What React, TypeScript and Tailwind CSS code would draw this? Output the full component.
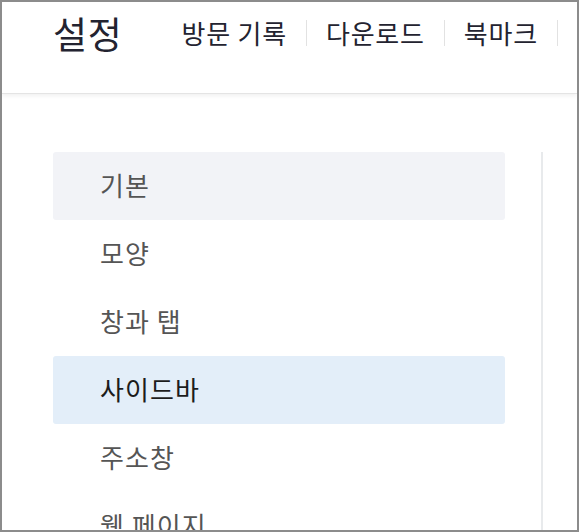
const navItems = ["방문 기록", "다운로드", "북마크", "확장"];

const menu = [
  { label: "기본", state: "hover" },
  { label: "모양", state: "" },
  { label: "창과 탭", state: "" },
  { label: "사이드바", state: "active" },
  { label: "주소창", state: "" },
  { label: "웹 페이지", state: "" },
];

export default function App() {
  return (
    <div
      className="w-[579px] h-[532px] overflow-hidden border-2 border-[#8c8c8c] bg-white"
      style={{ fontFamily: '"Noto Sans CJK KR", "Noto Sans", sans-serif' }}
    >
      <header className="h-[92px] border-b border-[#e4e4e4] shadow-[0_2px_4px_rgba(0,0,0,0.06)]">
        <div className="flex items-center h-[62px] pl-[51px] whitespace-nowrap">
          <h1 className="text-[37px] leading-none text-[#232330] mr-[40px] tracking-[0.02em]">설정</h1>
          <nav className="flex items-center">
            {navItems.map((item, i) => (
              <div key={item} className="flex items-center">
                {i > 0 && <span className="w-px h-[26px] bg-[#e2e2e2]" />}
                <span className="px-[19px] text-[26px] leading-none tracking-[0.03em] text-[#232330]">
                  {item}
                </span>
              </div>
            ))}
          </nav>
        </div>
      </header>

      <div className="flex pt-[58px] pl-[51px]">
        <ul className="w-[452px] shrink-0 flex flex-col">
          {menu.map((m) => (
            <li
              key={m.label}
              className={
                "h-[68px] flex items-center pl-[47px] pb-[3px] text-[26px] leading-none tracking-[0.04em] rounded-[3px] " +
                (m.state === "active"
                  ? "bg-[#e3eef9] text-[#1c1c1c]"
                  : m.state === "hover"
                  ? "bg-[#f2f3f7] text-[#555555]"
                  : "text-[#555555]")
              }
            >
              {m.label}
            </li>
          ))}
        </ul>
        <div className="ml-[36px] w-[2px] h-[400px] bg-[#e8eaec]" />
      </div>
    </div>
  );
}
